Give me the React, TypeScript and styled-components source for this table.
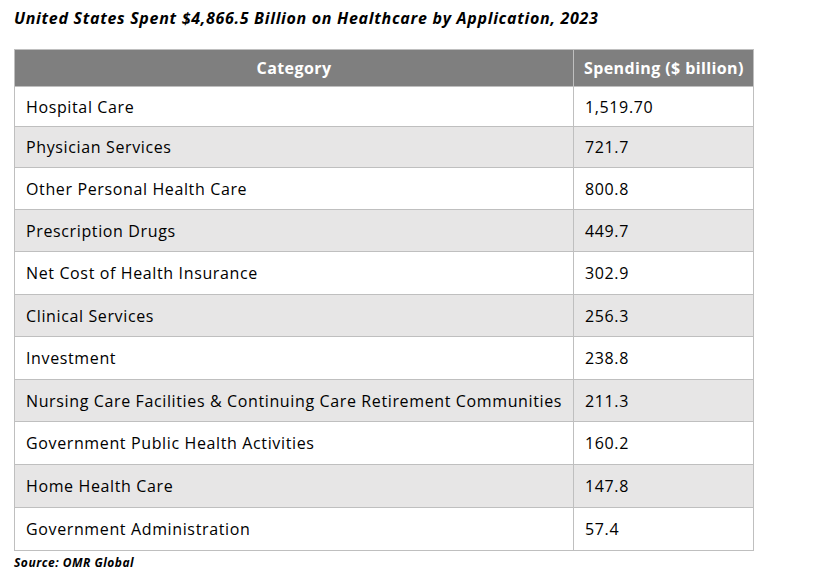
import React from 'react';
import styled, { createGlobalStyle } from 'styled-components';

const GlobalStyle = createGlobalStyle`
  body {
    margin: 0;
    background: #ffffff;
    font-family: "Open Sans", Lato, sans-serif;
    color: #000;
  }
`;

const Page = styled.div`
  padding: 8px 0 0 14px;
  width: 814px;
  height: 575px;
  box-sizing: border-box;
`;

const Title = styled.h1`
  margin: 0 0 21px;
  font-size: 16px;
  font-weight: 700;
  font-style: italic;
  line-height: 20px;
  letter-spacing: 0.7px;
  white-space: nowrap;
`;

const Table = styled.div`
  width: 738px;
  border: 1px solid #bfbfbf;
  border-top: none;
`;

const Row = styled.div<{ $shade?: boolean; $h: number }>`
  display: grid;
  grid-template-columns: 558px 1fr;
  height: ${p => p.$h - 1}px;
  background: ${p => (p.$shade ? '#e7e6e6' : '#ffffff')};
  border-top: 1px solid #bfbfbf;
`;

const HeadRow = styled.div`
  display: grid;
  grid-template-columns: 558px 1fr;
  height: 36px;
  background: #7f7f7f;
  border-top: 1px solid #bfbfbf;
`;

const HeadCell = styled.div<{ $center?: boolean }>`
  display: flex;
  align-items: center;
  justify-content: ${p => (p.$center ? 'center' : 'flex-start')};
  padding: ${p => (p.$center ? '0' : '0 0 0 10px')};
  color: #ffffff;
  font-weight: 700;
  font-size: 16px;
  letter-spacing: 0.4px;
  white-space: nowrap;
  & + & {
    border-left: 1px solid #bfbfbf;
  }
`;

const Cell = styled.div`
  display: flex;
  align-items: center;
  padding: 0 11px;
  font-size: 16px;
  letter-spacing: 0.63px;
  white-space: nowrap;
  & + & {
    border-left: 1px solid #bfbfbf;
  }
`;

const Source = styled.div`
  margin-top: 3px;
  font-size: 12px;
  font-weight: 700;
  font-style: italic;
  letter-spacing: 0.5px;
`;

const rows: [string, string][] = [
  ['Hospital Care', '1,519.70'],
  ['Physician Services', '721.7'],
  ['Other Personal Health Care', '800.8'],
  ['Prescription Drugs', '449.7'],
  ['Net Cost of Health Insurance', '302.9'],
  ['Clinical Services', '256.3'],
  ['Investment', '238.8'],
  ['Nursing Care Facilities & Continuing Care Retirement Communities', '211.3'],
  ['Government Public Health Activities', '160.2'],
  ['Home Health Care', '147.8'],
  ['Government Administration', '57.4'],
];

const heights = [40, 41, 42, 42, 43, 42, 43, 42, 43, 43, 43];

export default function App() {
  return (
    <Page>
      <GlobalStyle />
      <Title>United States Spent $4,866.5 Billion on Healthcare by Application, 2023</Title>
      <Table>
        <HeadRow>
          <HeadCell $center>Category</HeadCell>
          <HeadCell>Spending ($ billion)</HeadCell>
        </HeadRow>
        {rows.map(([name, value], i) => (
          <Row key={name} $shade={i % 2 === 1} $h={heights[i]}>
            <Cell>{name}</Cell>
            <Cell>{value}</Cell>
          </Row>
        ))}
      </Table>
      <Source>Source: OMR Global</Source>
    </Page>
  );
}
